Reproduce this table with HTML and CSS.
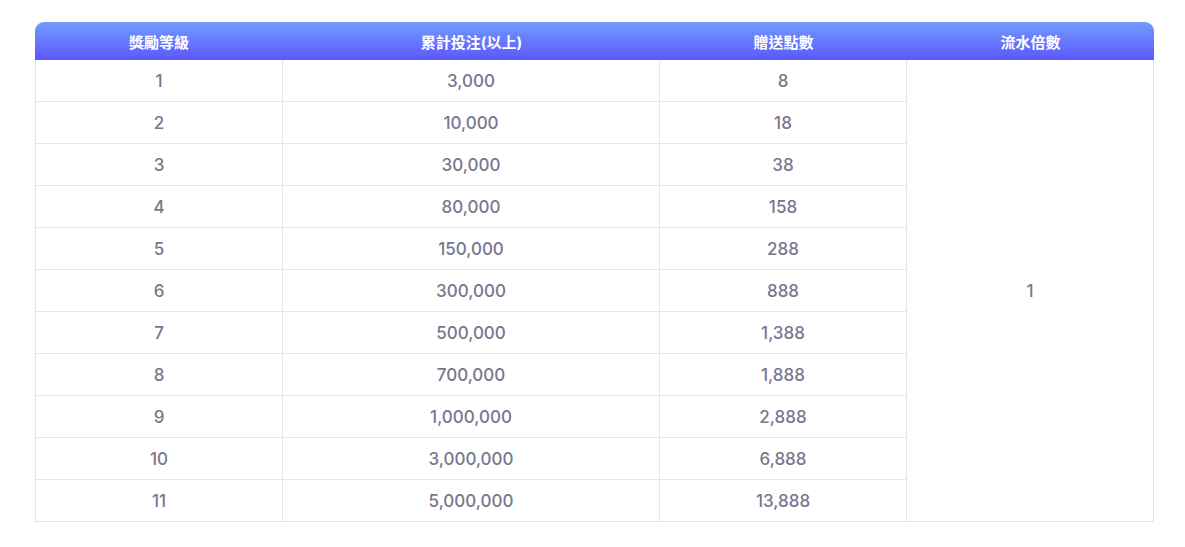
FILE: index.html
```html
<!DOCTYPE html>
<html lang="zh-Hant">
<head>
<meta charset="utf-8">
<title>獎勵等級</title>
<link rel="stylesheet" href="styles.css">
</head>
<body>
<div class="wrap">
  <table class="tbl">
    <thead>
      <tr>
        <th class="c1">獎勵等級</th>
        <th class="c2">累計投注(以上)</th>
        <th class="c3">贈送點數</th>
        <th class="c4">流水倍數</th>
      </tr>
    </thead>
    <tbody>
      <tr><td>1</td><td>3,000</td><td>8</td><td class="merged" rowspan="11">1</td></tr>
      <tr><td>2</td><td>10,000</td><td>18</td></tr>
      <tr><td>3</td><td>30,000</td><td>38</td></tr>
      <tr><td>4</td><td>80,000</td><td>158</td></tr>
      <tr><td>5</td><td>150,000</td><td>288</td></tr>
      <tr><td>6</td><td>300,000</td><td>888</td></tr>
      <tr><td>7</td><td>500,000</td><td>1,388</td></tr>
      <tr><td>8</td><td>700,000</td><td>1,888</td></tr>
      <tr><td>9</td><td>1,000,000</td><td>2,888</td></tr>
      <tr><td>10</td><td>3,000,000</td><td>6,888</td></tr>
      <tr><td>11</td><td>5,000,000</td><td>13,888</td></tr>
    </tbody>
  </table>
</div>
</body>
</html>
```

FILE: styles.css
```css
html, body {
  margin: 0;
  padding: 0;
  background: #ffffff;
}
body {
  font-family: Inter, "Noto Sans CJK TC", "Noto Sans", sans-serif;
}
.wrap {
  padding: 22px 31px 0 35px;
}
.tbl {
  width: 1119px;
  border-collapse: separate;
  border-spacing: 0;
  table-layout: fixed;
}
.tbl th {
  height: 38px;
  padding: 0;
  color: #ffffff;
  font-size: 15px;
  font-weight: 700;
  text-align: center;
  vertical-align: middle;
  background: linear-gradient(180deg, #719cfd 0%, #5c57fc 100%);
}
.tbl th.c1 { width: 248px; border-top-left-radius: 9px; }
.tbl th.c2 { width: 377px; }
.tbl th.c3 { width: 247px; }
.tbl th.c4 { width: 247px; border-top-right-radius: 9px; }
.tbl td {
  height: 41px;
  padding: 0;
  text-align: center;
  vertical-align: middle;
  font-size: 17px;
  font-weight: 500;
  color: #78768f;
  border-right: 1px solid #e6e6ea;
  border-bottom: 1px solid #e6e6ea;
}
.tbl tbody tr td:first-child {
  border-left: 1px solid #e6e6ea;
}
.tbl td.merged {
  border-right: 1px solid #e6e6ea;
}
```
